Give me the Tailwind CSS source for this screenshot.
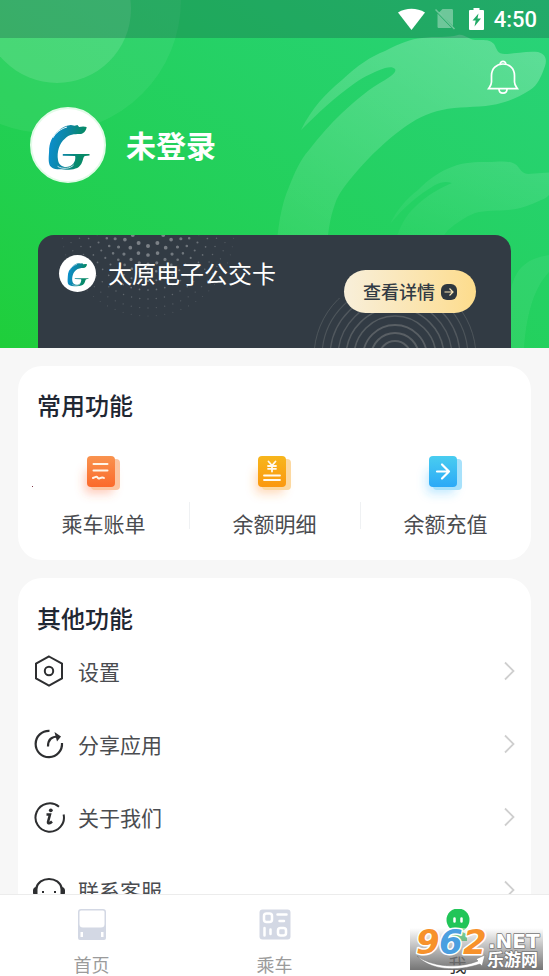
<!DOCTYPE html>
<html lang="zh-CN">
<head>
<meta charset="utf-8">
<meta name="viewport" content="width=device-width, initial-scale=1">
<title>我的</title>
<script src="https://cdn.jsdelivr.net/npm/@tailwindcss/browser@4"></script>
</head>
<body class="flex h-screen flex-col overflow-hidden bg-[#f7f7f7] font-['Noto_Sans_CJK_SC',sans-serif] text-[#4a4c50]">

<svg class="absolute h-0 w-0" aria-hidden="true">
  <defs>
    <linearGradient id="logoFill" x1="0" y1="0.3" x2="1" y2="0.5">
      <stop offset="0" stop-color="#0b8fd0"/><stop offset="0.45" stop-color="#0d86a0"/><stop offset="0.8" stop-color="#078a68"/>
    </linearGradient>
  </defs>
  <symbol id="logo" viewBox="0 0 76 76">
    <path fill="url(#logoFill)" d="M57.700 19L54 18.500L49.700 19L48 17L45 17.700L41 17C35 17.500 31 20 28 23C21 29 18 36 18 45C17.500 52 17 58 20 61C23 64 29 64 36 64C44 64 49 63 52 58C54 55 54 50 56 49.700L60.700 49V47.500H32.500V49.300L45.500 49.700C46.500 54 44 59 40 60.500C34 62.500 28.500 60 27.500 54C26 45 29 36 34.700 31.300C39 27 45 26.500 50 26.500C54 26.500 57 24 57.700 19Z"/>
    <path d="M22 30.500C25 25 31 20.500 37 19" fill="none" stroke="#fff" stroke-width="1"/>
    <path d="M27 60.500C32 64 41 63 44 59" fill="none" stroke="#fff" stroke-width="0.800"/>
  </symbol>
  <symbol id="chevron" viewBox="0 0 12 20">
    <path d="M1 1.500L9.500 10L1 18.500" fill="none" stroke="#cfcfcf" stroke-width="1.800"/>
  </symbol>
</svg>

<main class="min-h-0 flex-1 overflow-y-auto [scrollbar-width:none]">
  <header class="relative overflow-hidden bg-linear-to-tr from-[#1fce3a] to-[#29d37a]">
    <svg class="absolute inset-0 h-full w-full" viewBox="0 0 549 348" preserveAspectRatio="xMidYMin slice" aria-hidden="true">
      <defs>
        <linearGradient id="swoosh" x1="0.8" y1="0" x2="0.1" y2="1">
          <stop offset="0" stop-color="#fff" stop-opacity="0.24"/><stop offset="1" stop-color="#fff" stop-opacity="0.07"/>
        </linearGradient>
        <linearGradient id="swooshSmall" x1="0.8" y1="0" x2="0.1" y2="1">
          <stop offset="0" stop-color="#fff" stop-opacity="0.11"/><stop offset="1" stop-color="#fff" stop-opacity="0.03"/>
        </linearGradient>
      </defs>
      <circle cx="48" cy="0" r="133" fill="#fff" fill-opacity="0.06"/>
      <circle cx="57" cy="9" r="74" fill="#fff" fill-opacity="0.12"/>
      <path fill="url(#swoosh)" d="M301 130C312 108 325 94 342 80C358 65 370 57 385 51C400 43 411 39 422 38C436 36 448 38 458 35C465 34 467 39 475 40C483 40 490 39 494 44C497 49 497 54 505 54C515 54 525 51 538 52C546 54 547 60 545 66C541 77 538 85 530 90C518 98 505 103 492 105C475 108 458 106 442 110C427 113 414 120 402 129C386 141 371 155 358 170C346 184 338 194 335 204C329 220 327 240 326 260L276 260C277 230 281 205 289 187C295 172 300 160 309 150C320 136 330 124 342 113C356 100 370 88 385 80C391 76 397 72 395 69C393 67 390 67 385 68C374 72 365 76 355 83C335 97 317 114 301 130Z"/>
      <path fill="url(#swooshSmall)" d="M390 224C397 210 406 199 418 190C429 179 440 171 452 167C464 162 476 162 488 162C498 162 508 160 515 164C520 167 520 173 528 174L556 172L556 188C551 192 547 199 541 200C531 205 520 209 508 210C497 211 486 210 475 213C465 217 456 223 448 230L440 240L396 240C399 228 406 215 415 207C427 195 440 188 452 183C446 181 441 182 435 185C418 195 403 208 390 224Z"/>
      <path fill="#fff" fill-opacity="0.06" d="M549 255C528 258 515 268 511 290L511 348L524 348C526 320 532 290 549 272Z"/>
    </svg>

    <div class="relative flex h-[38px] items-center justify-end bg-[#124040]/28 pr-3 text-white">
      <svg class="h-[22px] w-[27px]" viewBox="0 0 27 22" aria-label="Wi-Fi"><path d="M0 4.500C8-0.500 19-0.500 27 4.500L13.500 22Z" fill="#fff"/></svg>
      <svg class="ml-2.5 h-[22px] w-5" viewBox="0 0 20 22" aria-label="无 SIM 卡"><path d="M7.500 1H16.500C17.500 1 18 1.500 18 2.500V18L4 4.500ZM2.500 5.500L16.500 20H4C3 20 2.500 19.500 2.500 18.500Z" fill="#fff" fill-opacity="0.35"/><path d="M0.500 1.500L19.500 21" stroke="#fff" stroke-opacity="0.350" stroke-width="1.500"/></svg>
      <svg class="ml-3.5 h-[22px] w-[15px]" viewBox="0 0 15 22" aria-label="正在充电"><path fill="#fff" fill-rule="evenodd" d="M4.500 0H10.500V2H14Q15 2 15 3V21Q15 22 14 22H1Q0 22 0 21V3Q0 2 1 2H4.500ZM9.500 5.500L3.500 12.500H6.700L5.500 18.500L12 10.500H8.500Z"/></svg>
      <span class="ml-2.5 pt-0.5 font-[Roboto,sans-serif] text-[22px] leading-6 font-medium">4:50</span>
    </div>

    <div class="relative flex justify-end pt-[22px] pr-[30px]">
      <button type="button" aria-label="消息通知" class="h-9 w-8">
        <svg class="h-9 w-8" viewBox="0 0 32 36" fill="none" stroke="#fff" stroke-width="1.700"><path d="M16 4C22.500 4 27.500 8.500 27.500 15.500V22C27.500 25 29 26.500 30.500 28.700H1.500C3 26.500 4.500 25 4.500 22V15.500C4.500 8.500 9.500 4 16 4Z"/><path d="M13.200 4.200C13 0.300 19 0.300 18.800 4.200M12 29C12 34.500 20 34.500 20 29"/></svg>
      </button>
    </div>

    <div class="relative mt-[11px] flex items-center gap-5 pl-[30px] text-white">
      <svg class="h-[76px] w-[76px] rounded-full border-2 border-[#e2fbe8] bg-white" aria-label="头像"><use href="#logo"/></svg>
      <h1 class="pb-0.5 text-[30px] leading-10 font-bold">未登录</h1>
    </div>

    <section class="relative mx-[38px] mt-[52px] h-[113px] overflow-hidden rounded-t-2xl bg-[#323b44]">
      <svg class="absolute top-0 left-0 h-[113px] w-[230px]" viewBox="0 0 230 113" fill="none" stroke="#fff" stroke-linecap="round" aria-hidden="true">
        <g transform="rotate(90 110 -5)">
          <circle cx="110" cy="-5" r="16" stroke-width="4" stroke-opacity="0.36" pathLength="10" stroke-dasharray="0 1"/>
          <circle cx="110" cy="-5" r="25" stroke-width="3.700" stroke-opacity="0.350" pathLength="16" stroke-dasharray="0 1"/>
          <circle cx="110" cy="-5" r="34" stroke-width="3.200" stroke-opacity="0.320" pathLength="24" stroke-dasharray="0 1"/>
          <circle cx="110" cy="-5" r="42" stroke-width="2.600" stroke-opacity="0.300" pathLength="32" stroke-dasharray="0 1"/>
          <circle cx="110" cy="-5" r="51" stroke-width="2.100" stroke-opacity="0.280" pathLength="38" stroke-dasharray="0 1"/>
          <circle cx="110" cy="-5" r="60" stroke-width="1.700" stroke-opacity="0.260" pathLength="44" stroke-dasharray="0 1"/>
          <circle cx="110" cy="-5" r="69" stroke-width="1.500" stroke-opacity="0.220" pathLength="52" stroke-dasharray="0 1"/>
          <circle cx="110" cy="-5" r="78" stroke-width="1.300" stroke-opacity="0.180" pathLength="58" stroke-dasharray="0 1"/>
          <circle cx="110" cy="-5" r="86" stroke-width="1.200" stroke-opacity="0.130" pathLength="64" stroke-dasharray="0 1"/>
        </g>
      </svg>
      <svg class="absolute right-[34px] bottom-0 h-[50px] w-[164px]" viewBox="0 0 164 50" fill="none" stroke="#595f64" aria-hidden="true">
        <circle cx="82" cy="59" r="16" stroke-width="2"/><circle cx="82" cy="59" r="24" stroke-width="2"/>
        <circle cx="82" cy="59" r="32" stroke-width="1.800"/><circle cx="82" cy="59" r="41" stroke-width="1.700" stroke-opacity="0.9"/>
        <circle cx="82" cy="59" r="49" stroke-width="1.500" stroke-opacity="0.9"/><circle cx="82" cy="59" r="57" stroke-width="1.400" stroke-opacity="0.8"/>
        <circle cx="82" cy="59" r="65" stroke-width="1.300" stroke-opacity="0.8"/><circle cx="82" cy="59" r="73" stroke-width="1.200" stroke-opacity="0.7"/>
        <circle cx="82" cy="59" r="81" stroke-width="1" stroke-opacity="0.7"/>
      </svg>
      <div class="relative flex items-start justify-between pt-5 pr-[35px] pl-[21px]">
        <div class="flex items-center gap-3">
          <svg class="h-[37px] w-[37px] rounded-full bg-white" aria-hidden="true"><use href="#logo"/></svg>
          <h2 class="pb-0.5 text-2xl leading-8 text-white">太原电子公交卡</h2>
        </div>
        <button type="button" class="mt-[15px] flex h-[43px] items-center gap-1.5 rounded-full bg-linear-to-r from-[#f8efda] to-[#fddc8c] pr-[19px] pl-[19px] text-lg leading-6 font-medium text-[#323b44]">
          <span class="pb-0.5">查看详情</span>
          <svg class="h-4 w-4" viewBox="0 0 16 16" aria-hidden="true"><rect width="16" height="16" rx="6" fill="#2e373f"/><path d="M3.500 8H12M8.500 4.500L12 8L8.500 11.500" fill="none" stroke="#fbe7b8" stroke-width="1.200"/></svg>
        </button>
      </div>
    </section>
  </header>

  <section class="relative mx-[18px] mt-[18px] rounded-3xl bg-white pt-[23px] pb-[23px]">
    <span class="absolute top-[120px] left-3.5 h-px w-px bg-[#803848]"></span>
    <h2 class="px-[19px] text-2xl leading-8 font-medium text-[#1f2733]">常用功能</h2>
    <div class="mt-7 grid grid-cols-3 text-[21px] leading-7">
      <a href="#" class="flex flex-col items-center">
        <svg class="h-[60px] w-[60px]" viewBox="1 -1 60 60" aria-hidden="true">
          <defs><linearGradient id="gOrange" x2="0" y2="1"><stop stop-color="#f9934f"/><stop offset="1" stop-color="#fb6a2b"/></linearGradient>
          <filter id="soft" x="-50%" y="-50%" width="200%" height="200%"><feGaussianBlur stdDeviation="5"/></filter></defs>
          <rect x="11" y="19" width="30" height="25" rx="6" fill="#ff6e40" fill-opacity="0.33" filter="url(#soft)"/>
          <rect x="18" y="9" width="29" height="31" rx="4" fill="#fcc6a2"/>
          <rect x="14" y="6" width="28" height="31" rx="4" fill="url(#gOrange)"/>
          <path d="M20.500 14H34.500M20.500 20.500H34.500M20 28C23 26.500 24 26 25 28C26 30 28 26 31 28" fill="none" stroke="#fff5e8" stroke-width="2" stroke-linecap="round"/>
        </svg>
        <span>乘车账单</span>
      </a>
      <a href="#" class="relative flex flex-col items-center before:absolute before:bottom-2 before:left-0 before:h-[27px] before:w-px before:bg-[#eff1f3]">
        <svg class="h-[60px] w-[60px]" viewBox="1 -1 60 60" aria-hidden="true">
          <defs><linearGradient id="gYellow" x2="0" y2="1"><stop stop-color="#f7b61c"/><stop offset="1" stop-color="#fb980f"/></linearGradient></defs>
          <rect x="11" y="19" width="30" height="25" rx="6" fill="#ff9030" fill-opacity="0.3" filter="url(#soft)"/>
          <rect x="18" y="9" width="29" height="31" rx="4" fill="#fcd8a0"/>
          <rect x="14" y="6" width="28" height="31" rx="4" fill="url(#gYellow)"/>
          <path d="M24.500 11.500L28 15.500L31.500 11.500M28 15.500V21.500M24 16H32M24 18.800H32M20 25.500H36M20 30H36" fill="none" stroke="#fffaf0" stroke-width="1.800" stroke-linecap="round"/>
        </svg>
        <span>余额明细</span>
      </a>
      <a href="#" class="relative flex flex-col items-center before:absolute before:bottom-2 before:left-0 before:h-[27px] before:w-px before:bg-[#eff1f3]">
        <svg class="h-[60px] w-[60px]" viewBox="1 -1 60 60" aria-hidden="true">
          <defs><linearGradient id="gBlue" x2="0" y2="1"><stop stop-color="#49cdf0"/><stop offset="1" stop-color="#2ba9f7"/></linearGradient></defs>
          <rect x="11" y="19" width="30" height="25" rx="6" fill="#35b6ff" fill-opacity="0.27" filter="url(#soft)"/>
          <rect x="18" y="9" width="29" height="31" rx="4" fill="#a7e1fb"/>
          <rect x="14" y="6" width="28" height="31" rx="4" fill="url(#gBlue)"/>
          <path d="M22 21.500H34M27 14.500L34 21.500L27 28.500" fill="none" stroke="#fff" stroke-width="2.200" stroke-linecap="round" stroke-linejoin="round"/>
        </svg>
        <span>余额充值</span>
      </a>
    </div>
  </section>

  <section class="mx-[18px] mt-[18px] rounded-3xl bg-white pt-6 pb-4">
    <h2 class="px-[19px] text-2xl leading-8 font-medium text-[#1f2733]">其他功能</h2>
    <ul class="text-[21px] leading-7">
      <li><a href="#" class="flex h-[73px] items-center pr-[15px] pl-[15px]">
        <svg class="h-8 w-8" viewBox="0 0 32 32" fill="none" stroke="#2d2e30" stroke-width="2" aria-hidden="true"><path d="M16 1.500L29 8.700V23.300L16 30.500L3 23.300V8.700Z"/><circle cx="16" cy="16" r="4.200"/></svg>
        <span class="ml-[13px] flex-1">设置</span>
        <svg class="h-5 w-3" aria-hidden="true"><use href="#chevron"/></svg>
      </a></li>
      <li><a href="#" class="flex h-[73px] items-center pr-[15px] pl-[15px]">
        <svg class="h-8 w-8" viewBox="0 0 32 32" fill="none" stroke="#2d2e30" stroke-width="2.200" aria-hidden="true"><path d="M16.500 2.800A13.200 13.200 0 1 0 29 15"/><path d="M15 18.500C15 11.500 18.500 8.500 25 8.500"/><path d="M21.500 4L28 8.500L24 13.500Z" fill="#2d2e30" stroke="none"/></svg>
        <span class="ml-[13px] flex-1">分享应用</span>
        <svg class="h-5 w-3" aria-hidden="true"><use href="#chevron"/></svg>
      </a></li>
      <li><a href="#" class="flex h-[73px] items-center pr-[15px] pl-[15px]">
        <svg class="h-8 w-8" viewBox="0 0 32 32" fill="none" stroke="#2d2e30" stroke-width="2" aria-hidden="true"><path d="M26 5.800A14.200 14.200 0 1 0 30.600 13.500"/><path d="M13.500 13.500H17L15 21C14.800 23 17 22.500 19 20.500" stroke-width="2.500"/><circle cx="17.800" cy="9.300" r="1.900" fill="#2d2e30" stroke="none"/></svg>
        <span class="ml-[13px] flex-1">关于我们</span>
        <svg class="h-5 w-3" aria-hidden="true"><use href="#chevron"/></svg>
      </a></li>
      <li><a href="#" class="flex h-[73px] items-center pr-[15px] pl-[15px]">
        <svg class="h-8 w-8" viewBox="0 0 32 32" fill="none" stroke="#2d2e30" stroke-width="2" aria-hidden="true"><path d="M3 15C5.500 1.500 26.500 1.500 29 15M29 21C27 32 5 32 3 21M10 17V19M22 17V19"/><path d="M3.500 14V21C0 21 0 14 3.500 14ZM28.500 14V21C32 21 32 14 28.500 14Z" fill="#2d2e30"/></svg>
        <span class="ml-[13px] flex-1">联系客服</span>
        <svg class="h-5 w-3" aria-hidden="true"><use href="#chevron"/></svg>
      </a></li>
    </ul>
  </section>
</main>

<nav class="relative grid grid-cols-3 border-t border-[#ececec] bg-white pt-3.5 text-lg leading-6 text-[#9b9b9b]">
  <a href="#" class="flex flex-col items-center gap-[11px]">
    <svg class="h-8 w-8" viewBox="0 0 32 32" aria-hidden="true"><path fill="#d3d8e4" fill-rule="evenodd" d="M5 0H27Q30 0 30 3V29Q30 31 28 31H4Q2 31 2 29V3Q2 0 5 0ZM5 1.500Q3.500 1.500 3.500 3V15Q3.500 18.500 7 18.500H25Q28.500 18.500 28.500 15V3Q28.500 1.500 27 1.500ZM4.500 23V28H7V23ZM27.500 23H25V28H27.500Z"/></svg>
    <span>首页</span>
  </a>
  <a href="#" class="flex flex-col items-center gap-[11px]">
    <svg class="h-8 w-8" viewBox="0 0 32 32" aria-hidden="true"><rect x="0.500" y="0.500" width="31" height="30" rx="3" fill="#d3d8e4"/><g fill="none" stroke="#fff" stroke-width="2.500" stroke-linecap="round"><rect x="5" y="4.500" width="8" height="8.500" rx="2.500"/><rect x="19" y="19" width="8" height="7.500" rx="2.500"/><path d="M18.500 5.500H27.500M20.500 12H25M5.500 19V26.500M11.500 20.500V25"/></g></svg>
    <span>乘车</span>
  </a>
  <a href="#" aria-current="page" class="flex flex-col items-center gap-[11px] text-[#333]">
    <svg class="h-8 w-8" viewBox="0 0 32 32" aria-hidden="true"><circle cx="16" cy="11" r="11.500" fill="#21c558"/><path d="M12.500 9.500V12.500M19.500 9.500V12.500" stroke="#fff" stroke-width="2.500" stroke-linecap="round"/><path d="M7 26Q16 18 25 26V32H7Z" fill="#21c558"/></svg>
    <span>我</span>
  </a>
  <div class="pointer-events-none absolute right-1.5 bottom-1.5 h-[42px] w-[133px] bg-linear-to-b from-white/40 to-[#666]/90">
    <svg class="h-[42px] w-[133px] overflow-visible" viewBox="0 0 133 42" role="img" aria-label="962.NET 乐游网">
      <path d="M7 28C22 39 48 41 68 33L66 31L75 27L72 38L70 36C46 44 20 42 7 28Z" fill="#fff" stroke="#777" stroke-width="0.500"/>
      <g font-family="'DejaVu Sans','Liberation Sans',sans-serif" font-weight="700" stroke="#fff" stroke-width="3" paint-order="stroke" stroke-linejoin="round">
        <g font-style="italic" font-size="34"><text x="6" y="26" fill="#f7922b">9</text><text x="29" y="26" fill="#4a9fe0">6</text><text x="53" y="26" fill="#f7922b">2</text></g>
        <text x="78" y="20" font-size="20" stroke="#777" stroke-width="1.500" fill="#fff">.NET</text>
      </g>
      <text x="77" y="38" font-family="'Noto Sans CJK SC',sans-serif" font-size="17" font-weight="700" fill="#fff" stroke="#777" stroke-width="1.500" paint-order="stroke">乐游网</text>
    </svg>
  </div>
</nav>
</body>
</html>
